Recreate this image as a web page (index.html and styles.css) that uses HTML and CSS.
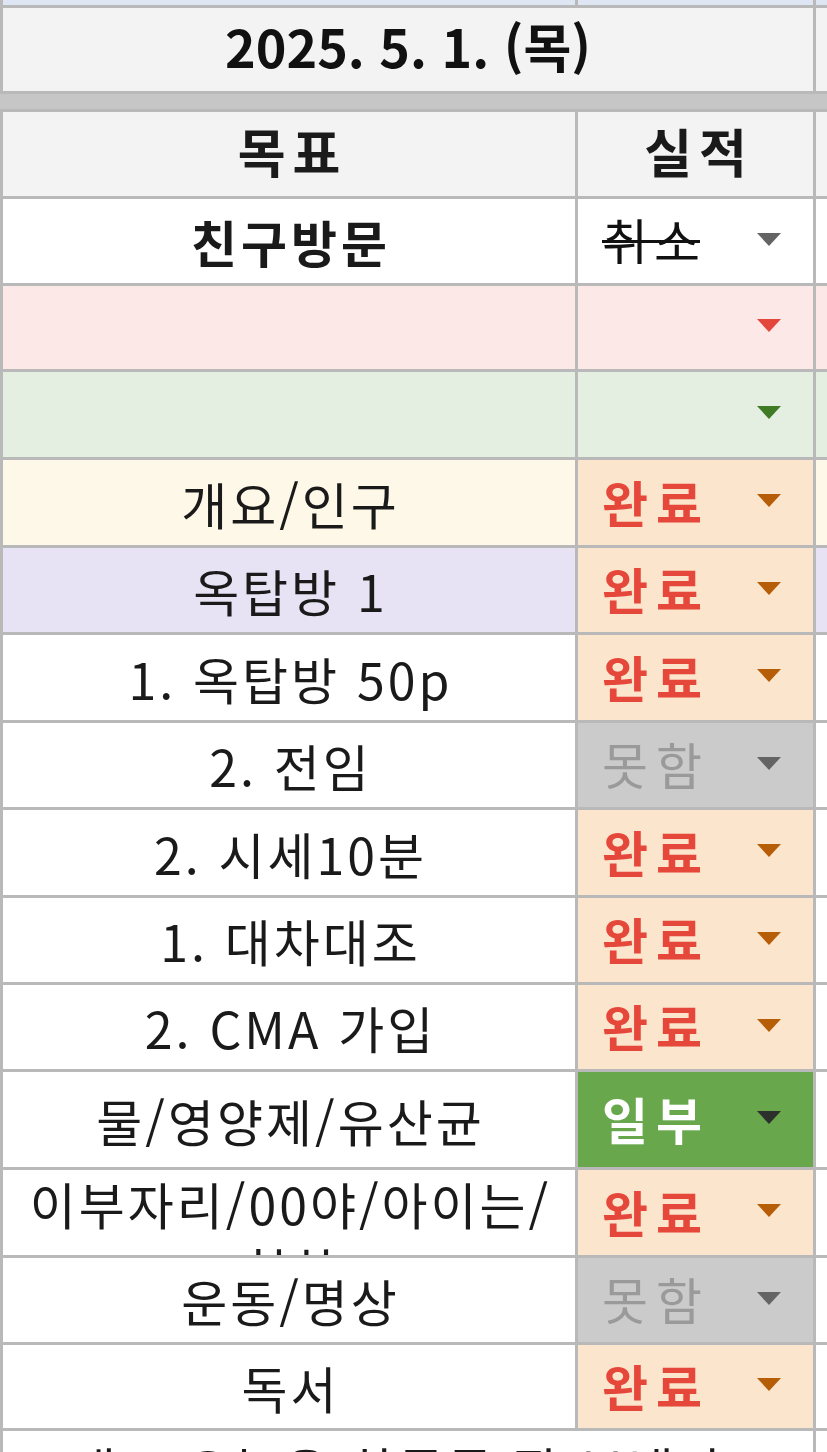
FILE: index.html
```html
<!DOCTYPE html>
<html lang="ko">
<head>
<meta charset="utf-8">
<title>2025. 5. 1. (목)</title>
<link rel="stylesheet" href="styles.css">
</head>
<body>
<div class="sheet">
  <div class="row top h5"><div class="c blue"></div><div class="c blue"></div><div class="c blue"></div></div>
  <div class="row h83"><div class="c hdr date span2">2025. 5. 1. (목)</div><div class="c hdr"></div></div>
  <div class="band"></div>
  <div class="row h84"><div class="c hdr th">목표</div><div class="c hdr th">실적</div><div class="c hdr"></div></div>

  <div class="row h84"><div class="c goal bold">친구방문</div><div class="c st"><span class="t cancel">취소</span><i class="arr gray"></i></div><div class="c"></div></div>
  <div class="row h83"><div class="c goal pink"></div><div class="c st pink"><span class="t"></span><i class="arr red"></i></div><div class="c pink"></div></div>
  <div class="row h85"><div class="c goal lgreen"></div><div class="c st lgreen"><span class="t"></span><i class="arr green"></i></div><div class="c lgreen"></div></div>
  <div class="row h85"><div class="c goal yellow">개요/인구</div><div class="c st peach"><span class="t done">완료</span><i class="arr orange"></i></div><div class="c yellow"></div></div>
  <div class="row h84"><div class="c goal lav">옥탑방 1</div><div class="c st peach"><span class="t done">완료</span><i class="arr orange"></i></div><div class="c lav"></div></div>
  <div class="row h85"><div class="c goal">1. 옥탑방 50p</div><div class="c st peach"><span class="t done">완료</span><i class="arr orange"></i></div><div class="c"></div></div>
  <div class="row h84"><div class="c goal">2. 전임</div><div class="c st grey"><span class="t miss">못함</span><i class="arr gray"></i></div><div class="c"></div></div>
  <div class="row h85"><div class="c goal">2. 시세10분</div><div class="c st peach"><span class="t done">완료</span><i class="arr orange"></i></div><div class="c"></div></div>
  <div class="row h84"><div class="c goal">1. 대차대조</div><div class="c st peach"><span class="t done">완료</span><i class="arr orange"></i></div><div class="c"></div></div>
  <div class="row h84"><div class="c goal">2. CMA 가입</div><div class="c st peach"><span class="t done">완료</span><i class="arr orange"></i></div><div class="c"></div></div>
  <div class="row h95"><div class="c goal">물/영양제/유산균</div><div class="c st dgreen"><span class="t part">일부</span><i class="arr dark"></i></div><div class="c"></div></div>
  <div class="row h85"><div class="c goal wrap">이부자리/00야/아이는/칭찬</div><div class="c st peach"><span class="t done">완료</span><i class="arr orange"></i></div><div class="c"></div></div>
  <div class="row h84"><div class="c goal">운동/명상</div><div class="c st grey"><span class="t miss">못함</span><i class="arr gray"></i></div><div class="c"></div></div>
  <div class="row h83"><div class="c goal">독서</div><div class="c st peach"><span class="t done">완료</span><i class="arr orange"></i></div><div class="c"></div></div>
  <div class="row last"><div class="c over span2"><span class="overtext">그래도 오늘은 하루를 잘 보냈다</span></div><div class="c"></div></div>
</div>
</body>
</html>
```

FILE: styles.css
```css
html, body {
  margin: 0;
  padding: 0;
  background: #ffffff;
}
body {
  width: 827px;
  height: 1452px;
  overflow: hidden;
  font-family: "Noto Sans CJK KR", "Noto Sans", sans-serif;
  color: #1a1a1a;
}
.sheet {
  display: flex;
  flex-direction: column;
  row-gap: 3px;
  background: #b9b9b9;
  height: 1452px;
}
.row {
  display: grid;
  grid-template-columns: 572px 235px 1fr;
  column-gap: 3px;
  padding-left: 3px;
  flex: none;
}
.h5 { height: 5px; }
.h83 { height: 83px; }
.h84 { height: 84px; }
.h85 { height: 85px; }
.h95 { height: 95px; }
.last { flex: 1; }

.band {
  height: 15px;
  background: #c6c6c6;
  flex: none;
}
.c {
  background: #ffffff;
  overflow: hidden;
  display: flex;
  align-items: center;
  min-width: 0;
}
.span2 { grid-column: span 2; }
.blue { background: #dde6f2; }
.hdr { background: #f3f3f3; }
.date {
  justify-content: center;
  font-weight: 700;
  font-size: 52px;
  letter-spacing: 0;
  color: #111;
  padding-bottom: 8px;
}
.th {
  justify-content: center;
  font-weight: 700;
  font-size: 52px;
  letter-spacing: 7px;
  padding-left: 7px;
  padding-bottom: 8px;
  color: #1a1a1a;
}
.goal {
  justify-content: center;
  text-align: center;
  font-size: 50px;
  letter-spacing: 3px;
  padding-left: 3px;
  color: #1a1a1a;
}
.bold { font-weight: 700; letter-spacing: 4px; padding-left: 4px; }
.wrap {
  align-items: flex-start;
  line-height: 66px;
  padding: 0 10px 0 13px;
  word-break: keep-all;
}
.st {
  justify-content: space-between;
  padding-left: 24px;
  padding-right: 32px;
  padding-bottom: 4px;
}
.t {
  font-size: 50px;
  letter-spacing: 8px;
  line-height: 1;
}
.cancel {
  text-decoration: line-through;
  text-decoration-thickness: 3px;
  color: #111;
  letter-spacing: 6px;
  clip-path: inset(0 6px 0 0);
}
.done { color: #e5483b; font-weight: 700; }
.miss { color: #9a9a9a; }
.part { color: #ffffff; font-weight: 700; }

.arr {
  display: block;
  width: 0;
  height: 0;
  border-left: 12px solid transparent;
  border-right: 12px solid transparent;
  border-top: 13px solid #666666;
  margin-top: 0;
}
.arr.gray { border-top-color: #646464; }
.arr.red { border-top-color: #e3463a; }
.arr.green { border-top-color: #3f7a24; }
.arr.orange { border-top-color: #b65d07; }
.arr.dark { border-top-color: #2c2f2b; }

.pink { background: #fce8e7; }
.lgreen { background: #e5efe1; }
.yellow { background: #fef8e8; }
.lav { background: #e7e3f4; }
.peach { background: #fce5cd; }
.grey { background: #cbcbcb; }
.dgreen { background: #68a74c; }

.over {
  align-items: flex-start;
  padding-left: 18px;
}
.overtext {
  font-size: 50px;
  letter-spacing: 3px;
  line-height: 1;
  margin-top: 12px;
  white-space: nowrap;
  color: #1a1a1a;
}
```
